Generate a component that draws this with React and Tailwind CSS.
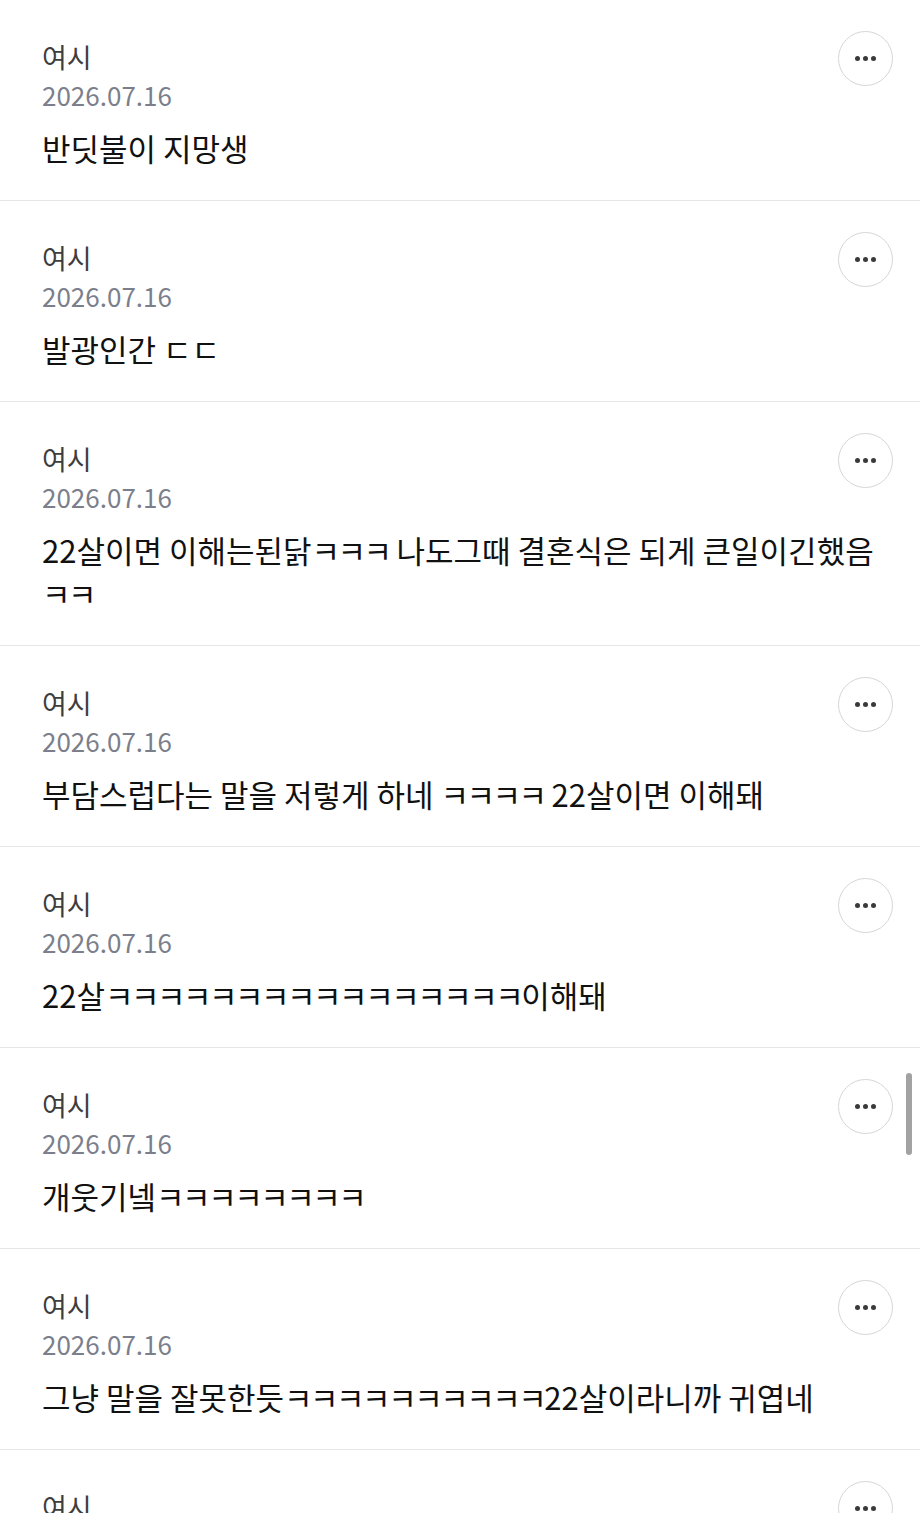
import React from "react";

const comments = [
  "반딧불이 지망생",
  "발광인간 ㄷㄷ",
  "22살이면 이해는된닭ㅋㅋㅋ 나도그때 결혼식은 되게 큰일이긴했음ㅋㅋ",
  "부담스럽다는 말을 저렇게 하네 ㅋㅋㅋㅋ 22살이면 이해돼",
  "22살ㅋㅋㅋㅋㅋㅋㅋㅋㅋㅋㅋㅋㅋㅋㅋㅋ이해돼",
  "개웃기넼ㅋㅋㅋㅋㅋㅋㅋㅋ",
  "그냥 말을 잘못한듯ㅋㅋㅋㅋㅋㅋㅋㅋㅋㅋ22살이라니까 귀엽네",
  "ㅋㅋㅋㅋㅋ",
];

function Rich({ text }) {
  const parts = text.split(/(ㅋ+)/);
  return parts.map((p, i) =>
    /^ㅋ+$/.test(p) ? (
      <span key={i} className="tracking-[-2.5px]">
        {p}
      </span>
    ) : (
      <React.Fragment key={i}>{p}</React.Fragment>
    )
  );
}

function MoreButton() {
  return (
    <div className="w-[55px] h-[55px] shrink-0 rounded-full border border-[#d6d6d6] bg-white flex items-center justify-center gap-[3.5px]">
      <span className="w-[4.5px] h-[4.5px] rounded-full bg-[#3a3a3a]" />
      <span className="w-[4.5px] h-[4.5px] rounded-full bg-[#3a3a3a]" />
      <span className="w-[4.5px] h-[4.5px] rounded-full bg-[#3a3a3a]" />
    </div>
  );
}

function Comment({ text }) {
  return (
    <div className="border-b border-[#e6e6e6] pl-[42px] pr-[27px] pt-[31px] pb-[31px]">
      <div className="flex items-start justify-between">
        <div className="mt-[8px]">
          <div className="text-[27px] leading-[36px] text-[#3d3d3d]">여시</div>
          <div className="mt-[1px] text-[26px] leading-[38px] text-[#7b7f8b]">2026.07.16</div>
        </div>
        <MoreButton />
      </div>
      <div className="mt-[12px] text-[31px] leading-[43px] text-[#111111]">
        <Rich text={text} />
      </div>
    </div>
  );
}

export default function App() {
  return (
    <div
      className="relative w-[920px] h-[1513px] overflow-hidden bg-white"
      style={{ fontFamily: '"Noto Sans CJK KR", "Noto Sans", sans-serif' }}
    >
      {comments.map((t, i) => (
        <Comment key={i} text={t} />
      ))}
      <div className="absolute right-[8px] top-[1073px] w-[6px] h-[82px] rounded-full bg-[#a2a2a2]" />
    </div>
  );
}
